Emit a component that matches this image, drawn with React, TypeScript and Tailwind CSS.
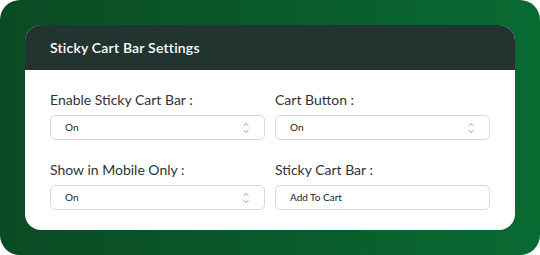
const Carets = () => (
  <svg width="8" height="14" viewBox="0 0 8 14" fill="none" stroke="#8a8a8a" strokeWidth="0.9" strokeLinecap="round" strokeLinejoin="round">
    <path d="M2 4.5 L4 2.5 L6 4.5" />
    <path d="M2 9.5 L4 11.5 L6 9.5" />
  </svg>
);

const SelectField = ({ label, value }: { label: string; value: string }) => (
  <div className="flex flex-col">
    <label className="text-[14px] leading-[20px] text-[#2f3332] mb-[5px]">{label}</label>
    <div className="h-[25px] border border-[#d9d9d9] rounded-[5px] flex items-center justify-between pl-[14px] pr-[14px]">
      <span className="text-[10px] text-[#222]">{value}</span>
      <Carets />
    </div>
  </div>
);

const TextField = ({ label, value }: { label: string; value: string }) => (
  <div className="flex flex-col">
    <label className="text-[14px] leading-[20px] text-[#2f3332] mb-[5px]">{label}</label>
    <div className="h-[25px] border border-[#d9d9d9] rounded-[5px] flex items-center pl-[14px]">
      <span className="text-[10px] text-[#222]">{value}</span>
    </div>
  </div>
);

export default function App() {
  return (
    <div
      className="w-[540px] h-[255px] rounded-[20px] bg-gradient-to-r from-[#0a4a22] to-[#086b32] p-[25px]"
      style={{ fontFamily: 'Lato, "Open Sans", sans-serif' }}
    >
      <div className="bg-white rounded-[16px] overflow-hidden h-[205px]">
        <div className="h-[45px] bg-[#233330] flex items-center px-[25px]">
          <h1 className="text-white text-[14px] font-semibold tracking-[0.2px]">Sticky Cart Bar Settings</h1>
        </div>
        <div className="grid grid-cols-2 gap-x-[10px] gap-y-[20px] px-[25px] pt-[20px]">
          <SelectField label="Enable Sticky Cart Bar :" value="On" />
          <SelectField label="Cart Button :" value="On" />
          <SelectField label="Show in Mobile Only :" value="On" />
          <TextField label="Sticky Cart Bar :" value="Add To Cart" />
        </div>
      </div>
    </div>
  );
}
